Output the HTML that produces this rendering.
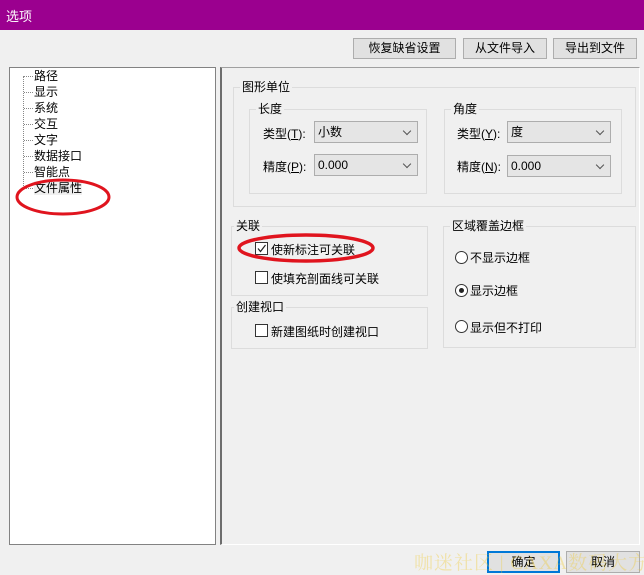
<!DOCTYPE html>
<html><head><meta charset="utf-8"><style>
*{box-sizing:border-box;margin:0;padding:0}
body{width:644px;height:574px;background:#f0f0f0;position:relative;overflow:hidden;font-family:"Liberation Sans","Microsoft YaHei","Noto Sans CJK SC",sans-serif;font-size:12px;color:#000}
.a{position:absolute;white-space:nowrap}
.btn{position:absolute;background:#e1e1e1;border:1px solid #adadad;text-align:center;line-height:18px;font-size:12px}
.grp{position:absolute;border:1px solid #dcdcdc}
.lbl{position:absolute;background:#f0f0f0;padding:0 2px;line-height:14px;top:-8px;left:6px}
.cmb{position:absolute;width:104px;height:22px;background:#e5e5e5;border:1px solid #adadad;line-height:20px;padding-left:3px}
.cmb:after{content:"";position:absolute;right:7px;top:6px;width:5px;height:5px;border-right:1px solid #555;border-bottom:1px solid #555;transform:rotate(45deg)}
.cb{position:absolute;width:13px;height:13px;border:1px solid #333;background:#fff}
.rd{position:absolute;width:13px;height:13px;border:1px solid #333;border-radius:50%;background:#fff}
.tree{position:absolute;left:34px;font-size:12px;line-height:16px}
.h{position:absolute;left:24px;width:9px;border-top:1px dotted #888}
</style></head><body>
<div class="a" style="left:0;top:0;width:644px;height:30px;background:#9b008f"></div>
<div class="a" style="left:6px;top:6px;color:#fff;font-size:13px">选项</div>

<div class="btn" style="left:353px;top:38px;width:103px;height:21px">恢复缺省设置</div>
<div class="btn" style="left:463px;top:38px;width:84px;height:21px">从文件导入</div>
<div class="btn" style="left:553px;top:38px;width:84px;height:21px">导出到文件</div>

<div class="a" style="left:9px;top:67px;width:207px;height:478px;background:#fff;border:1px solid #828282"></div>
<div class="a" style="left:23px;top:76px;width:0;height:112px;border-left:1px dotted #888"></div>
<div class="h" style="top:76px"></div><div class="h" style="top:92px"></div><div class="h" style="top:108px"></div><div class="h" style="top:124px"></div><div class="h" style="top:140px"></div><div class="h" style="top:156px"></div><div class="h" style="top:172px"></div><div class="h" style="top:188px"></div>
<div class="tree" style="top:68px">
<div>路径</div><div>显示</div><div>系统</div><div>交互</div><div>文字</div><div>数据接口</div><div>智能点</div><div><span style="background:#f0f0f0">文件属性</span></div>
</div>

<div class="a" style="left:220px;top:67px;width:420px;height:478px;border-left:2px solid #6d6d6d;border-top:1px solid #a0a0a0;border-right:1px solid #fff;border-bottom:1px solid #fff"></div>

<div class="grp" style="left:233px;top:87px;width:403px;height:120px"><span class="lbl">图形单位</span></div>
<div class="grp" style="left:249px;top:109px;width:178px;height:85px"><span class="lbl">长度</span></div>
<div class="grp" style="left:444px;top:109px;width:178px;height:85px"><span class="lbl">角度</span></div>
<div class="a" style="left:263px;top:125px">类型(<u>T</u>):</div>
<div class="cmb" style="left:314px;top:121px">小数</div>
<div class="a" style="left:263px;top:158px">精度(<u>P</u>):</div>
<div class="cmb" style="left:314px;top:154px">0.000</div>
<div class="a" style="left:457px;top:125px">类型(<u>Y</u>):</div>
<div class="cmb" style="left:507px;top:121px">度</div>
<div class="a" style="left:457px;top:158px">精度(<u>N</u>):</div>
<div class="cmb" style="left:507px;top:155px">0.000</div>

<div class="grp" style="left:231px;top:226px;width:197px;height:70px"><span class="lbl" style="left:2px">关联</span></div>
<div class="cb" style="left:255px;top:242px"></div>
<svg class="a" style="left:255px;top:242px" width="13" height="13"><path d="M3 6.5 L5.5 9.5 L10.5 3" fill="none" stroke="#222" stroke-width="1.2"/></svg>
<div class="a" style="left:271px;top:241px">使新标注可关联</div>
<div class="cb" style="left:255px;top:271px"></div>
<div class="a" style="left:271px;top:270px">使填充剖面线可关联</div>

<div class="grp" style="left:231px;top:307px;width:197px;height:42px"><span class="lbl" style="left:2px">创建视口</span></div>
<div class="cb" style="left:255px;top:324px"></div>
<div class="a" style="left:271px;top:323px">新建图纸时创建视口</div>

<div class="grp" style="left:443px;top:226px;width:193px;height:122px"><span class="lbl" style="left:6px">区域覆盖边框</span></div>
<div class="rd" style="left:455px;top:251px"></div><div class="a" style="left:470px;top:249px">不显示边框</div>
<div class="rd" style="left:455px;top:284px"></div><div class="a" style="left:459px;top:288px;width:5px;height:5px;border-radius:50%;background:#222"></div><div class="a" style="left:470px;top:282px">显示边框</div>
<div class="rd" style="left:455px;top:320px"></div><div class="a" style="left:470px;top:319px">显示但不打印</div>

<svg class="a" style="left:0;top:0" width="644" height="574">
<ellipse cx="63" cy="197" rx="46" ry="17" fill="none" stroke="#e0141e" stroke-width="3"/>
<ellipse cx="306" cy="248" rx="67" ry="13" fill="none" stroke="#e0141e" stroke-width="3.5"/>
</svg>

<div class="btn" style="left:487px;top:551px;width:73px;height:22px;border:2px solid #0078d7;background:#e1e1e1;line-height:18px">确定</div>
<div class="btn" style="left:566px;top:551px;width:74px;height:22px;line-height:20px">取消</div>
<div class="a" style="left:414px;top:548px;font-family:'Liberation Serif','Noto Serif CJK SC',serif;font-size:19px;color:rgba(240,200,40,0.35);letter-spacing:1px">咖迷社区 | CAXA数码大方</div>
</body></html>
